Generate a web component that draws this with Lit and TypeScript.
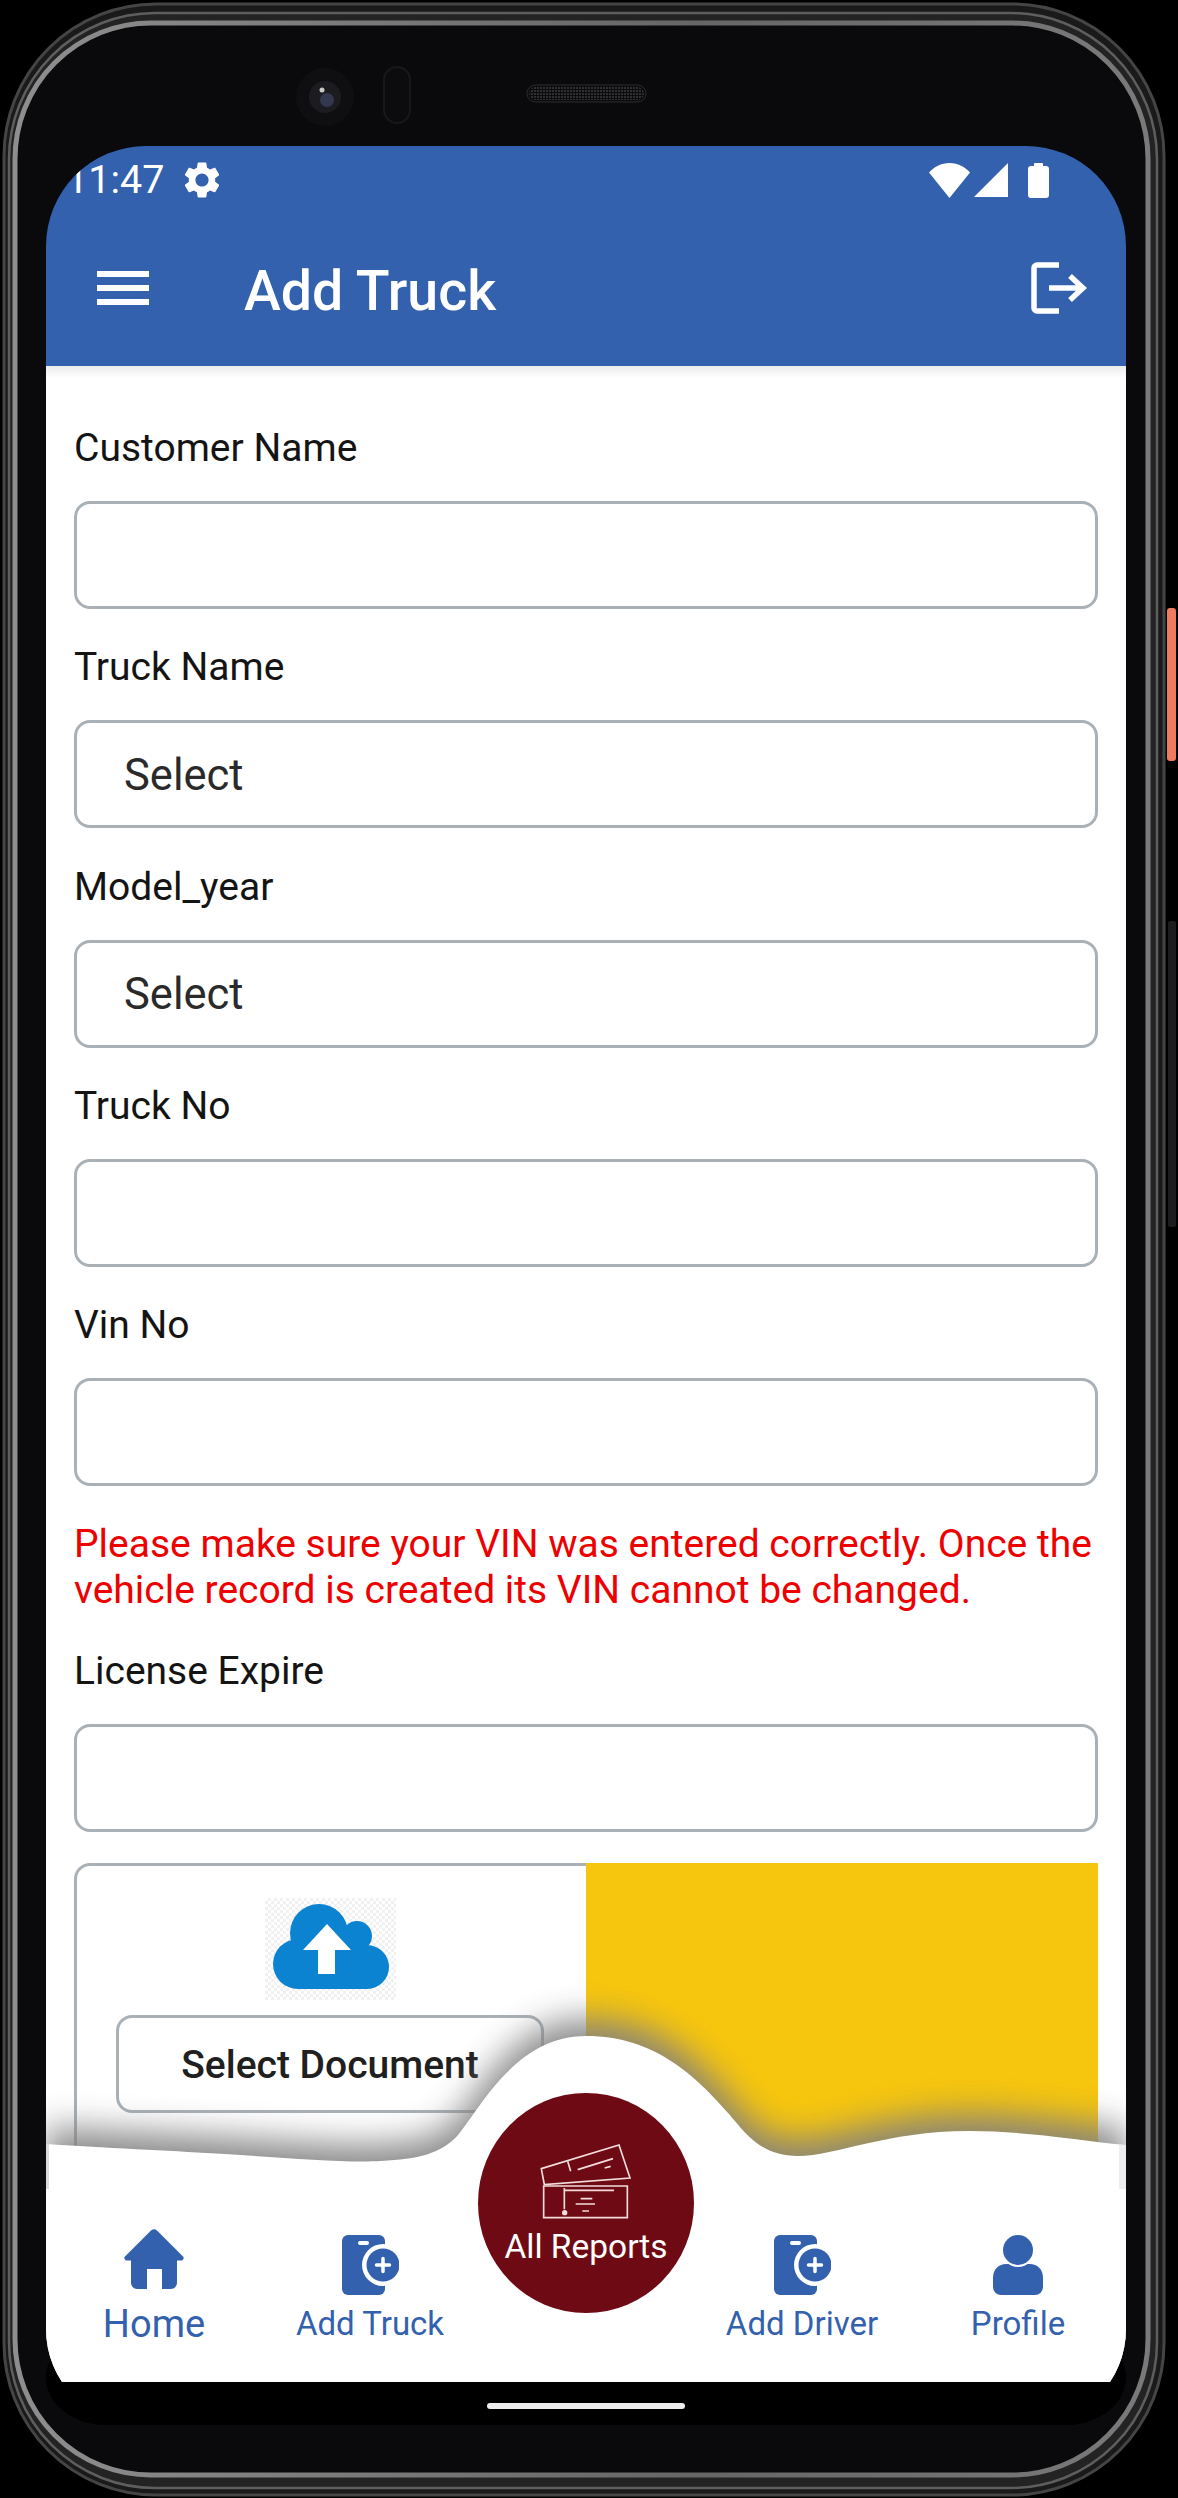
import { LitElement, html, css, svg } from "lit";
import { customElement } from "lit/decorators.js";

const GEAR = "M19.14,12.94c0.04-0.3,0.06-0.61,0.06-0.94c0-0.32-0.02-0.64-0.07-0.94l2.03-1.58c0.18-0.14,0.23-0.41,0.12-0.61l-1.92-3.32c-0.12-0.22-0.37-0.29-0.59-0.22l-2.39,0.96c-0.5-0.38-1.03-0.7-1.62-0.94L14.4,2.81c-0.04-0.24-0.24-0.41-0.48-0.41h-3.84c-0.24,0-0.43,0.17-0.47,0.41L9.25,5.35C8.66,5.59,8.12,5.92,7.63,6.29L5.24,5.33c-0.22-0.08-0.47,0-0.59,0.22L2.74,8.87C2.62,9.08,2.66,9.34,2.86,9.48l2.03,1.58C4.84,11.36,4.8,11.69,4.8,12s0.02,0.64,0.07,0.94l-2.03,1.58c-0.18,0.14-0.23,0.41-0.12,0.61l1.92,3.32c0.12,0.22,0.37,0.29,0.59,0.22l2.39-0.96c0.5,0.38,1.03,0.7,1.62,0.94l0.36,2.54c0.05,0.24,0.24,0.41,0.48,0.41h3.84c0.24,0,0.44-0.17,0.47-0.41l0.36-2.54c0.59-0.24,1.13-0.56,1.62-0.94l2.39,0.96c0.22,0.08,0.47,0,0.59-0.22l1.92-3.32c0.12-0.22,0.07-0.47-0.12-0.61L19.14,12.94z M12,15.6c-1.98,0-3.6-1.62-3.6-3.6s1.62-3.6,3.6-3.6s3.6,1.62,3.6,3.6S13.98,15.6,12,15.6z";

const CURVE = "M0,162 C80,167 130,169 179,172 C240,176 300,181 335,179 C372,177 395,172 412,153 C435,125 470,54 540,54 C610,54 650,95 683,132 C700,152 715,174 752,174 C790,174 840,149 923,149 C980,149 1030,158 1080,163 L1080,400 L0,400 Z";

const frame = svg`
  <svg class="frame" viewBox="0 0 1178 2498" width="1178" height="2498" aria-hidden="true">
    <defs>
      <pattern id="mesh" width="3" height="3" patternUnits="userSpaceOnUse">
        <circle cx="1" cy="1" r="0.8" fill="#5a5a5a"></circle>
      </pattern>
      <linearGradient id="topfade" x1="0" x2="1" y1="0" y2="0">
        <stop offset="0" stop-color="#8e8e8e"></stop>
        <stop offset="0.6" stop-color="#666"></stop>
        <stop offset="1" stop-color="#7a7a7a"></stop>
      </linearGradient>
    </defs>
    <rect x="1167" y="608" width="9" height="153" rx="3" fill="#ee7a5f"></rect>
    <rect x="1168" y="921" width="8" height="306" rx="2" fill="#1c1c1e"></rect>
    <rect x="4" y="4" width="1160" height="2491" rx="152" fill="#1a1a1b" stroke="#454545" stroke-width="3"></rect>
    <rect x="9" y="13" width="1148" height="2475" rx="146" fill="#232324" stroke="#5e5e5e" stroke-width="2.500"></rect>
    <rect x="15" y="23" width="1133" height="2452" rx="136" fill="#0a0a0c" stroke="url(#topfade)" stroke-width="5"></rect>
    <rect x="46" y="2330" width="1080" height="95" rx="60" fill="#000"></rect>
    <circle cx="325" cy="97" r="29" fill="#0f0f11"></circle>
    <circle cx="325" cy="97" r="16" fill="#1c1c20"></circle>
    <circle cx="327" cy="100" r="7" fill="#333850"></circle>
    <circle cx="322" cy="90" r="2.500" fill="#c8c8c8"></circle>
    <rect x="384" y="67" width="26" height="56" rx="13" fill="#0c0c0e" stroke="#18181a" stroke-width="2"></rect>
    <rect x="527" y="85" width="119" height="17" rx="8.500" fill="#0c0c0e" stroke="#2c2c2e"></rect>
    <rect x="529" y="87" width="115" height="13" rx="6.500" fill="url(#mesh)"></rect>
  </svg>`;

const phoneAdd = svg`
  <svg class="nav-icon" width="57" height="60" viewBox="0 0 57 60" aria-hidden="true">
    <path d="M6 0H37a6 6 0 0 1 6 6V54a6 6 0 0 1-6 6H6a6 6 0 0 1-6-6V6a6 6 0 0 1 6-6Z" fill="#3361ae"></path>
    <rect x="16" y="6" width="11" height="4" rx="2" fill="#fff"></rect>
    <circle cx="41" cy="30" r="21" fill="#fff"></circle>
    <circle cx="41" cy="30" r="16.500" fill="#3361ae"></circle>
    <path d="M41 23.500V36.500M34.500 30H47.500" stroke="#fff" stroke-width="3.500" stroke-linecap="round"></path>
  </svg>`;

const NAV_LEFT = [
  { label: "Home", cls: "home", icon: svg`
    <svg class="nav-icon" width="60" height="60" viewBox="0 0 60 60" aria-hidden="true">
      <path fill-rule="evenodd" fill="#3361ae" d="M27 1.500a4.500 4.500 0 0 1 6 0L58.500 27a2.500 2.500 0 0 1-2 4.500H53V54a6 6 0 0 1-6 6H38V40H23V60H13a6 6 0 0 1-6-6V31.500H3.500a2.500 2.500 0 0 1-2-4.500Z"></path>
    </svg>` },
  { label: "Add Truck", cls: "", icon: phoneAdd },
];
const NAV_RIGHT = [
  { label: "Add Driver", cls: "", icon: phoneAdd },
  { label: "Profile", cls: "", icon: svg`
    <svg class="nav-icon" width="50" height="60" viewBox="0 0 50 60" aria-hidden="true">
      <path fill="#3361ae" d="M0 43C0 34 6 29 13 29H37C44 29 50 34 50 43V52a8 8 0 0 1-8 8H8a8 8 0 0 1-8-8Z"></path>
      <circle cx="25" cy="15" r="17" fill="#fff"></circle>
      <circle cx="25" cy="15" r="15" fill="#3361ae"></circle>
    </svg>` },
];

@customElement("app-root")
export class AppRoot extends LitElement {
  static styles = css`
    :host {
      display: block;
      position: relative;
      width: 1178px;
      height: 2498px;
      box-sizing: border-box;
      padding: 146px 52px 73px 46px;
      background: #000;
      font-family: Roboto, "Liberation Sans", sans-serif;
      overflow: hidden;
    }
    .frame { position: absolute; left: 0; top: 0; display: block; }
    .screen {
      position: relative;
      height: 100%;
      display: flex;
      flex-direction: column;
      border-radius: 100px 100px 96px 96px;
      overflow: hidden;
      background: #000;
    }
    .appbar {
      height: 220px;
      flex: none;
      background: #3361ae;
      color: #fff;
      display: flex;
      flex-direction: column;
      position: relative;
      z-index: 1;
    }
    .status {
      height: 68px;
      display: flex;
      align-items: center;
      padding: 0 77px 0 20px;
    }
    .time { font-size: 39.500px; line-height: 68px; }
    .gear { margin-left: 16px; display: block; }
    .sp { flex: 1; }
    .status-icons { display: flex; align-items: center; }
    .status-icons svg { display: block; }
    .sig { margin-left: 4px; }
    .bat { margin-left: 20px; }
    .toolbar {
      flex: 1;
      display: flex;
      align-items: center;
      padding: 0 39px 4px 51px;
    }
    .burger { display: flex; flex-direction: column; gap: 8px; width: 52px; }
    .burger span { display: block; height: 6px; background: #fff; }
    .title { margin: 8px 0 0 95px; font-size: 55.500px; font-weight: 500; line-height: 60px; }
    .main {
      position: relative;
      flex: 1;
      min-height: 0;
      background: #fff;
      overflow: hidden;
      padding: 59px 28px 0;
    }
    .main::before {
      content: "";
      position: absolute;
      left: 0; right: 0; top: 0;
      height: 12px;
      background: linear-gradient(#ececec, #fff);
    }
    .field { margin-bottom: 35.250px; }
    .field.last { margin-bottom: 31px; }
    .field label {
      display: block;
      font-size: 39px;
      line-height: 46px;
      color: #141414;
      margin-bottom: 30px;
    }
    .input {
      height: 108px;
      box-sizing: border-box;
      border: 3px solid #a9b0b6;
      border-radius: 16px;
      padding: 2px 0 0 47px;
      display: flex;
      align-items: center;
      font-size: 43.500px;
      color: #2a2a2a;
      background: #fff;
    }
    .warn {
      color: #ee0000;
      font-size: 39px;
      line-height: 46px;
      margin-bottom: 35px;
      white-space: nowrap;
    }
    .upload {
      display: grid;
      grid-template-columns: 1fr 1fr;
      height: 500px;
    }
    .up-left {
      box-sizing: border-box;
      border: 3px solid #a9b0b6;
      border-right: 0;
      border-bottom: 0;
      border-radius: 16px 0 0 0;
      display: flex;
      flex-direction: column;
      align-items: center;
      padding: 32px 3px 0 0;
    }
    .up-right { background: #f6c50e; }
    .cloud-box {
      width: 131px;
      height: 102px;
      background: repeating-conic-gradient(#f1f1f1 0 25%, #fff 0 50%) 0 0 / 6px 6px;
    }
    .cloud-box svg { display: block; }
    .doc-btn {
      margin-top: 15px;
      width: 428px;
      height: 98px;
      box-sizing: border-box;
      border: 3px solid #a9b0b6;
      border-radius: 16px;
      display: flex;
      align-items: center;
      justify-content: center;
      padding-top: 2px;
      font-size: 39px;
      font-weight: 500;
      color: #202020;
      background: #fff;
    }
    .nav {
      position: absolute;
      left: 0;
      right: 0;
      bottom: 0;
      height: 400px;
    }
    .wave { position: absolute; left: 0; top: 0; display: block; overflow: visible; }
    .row {
      position: absolute;
      left: 0;
      right: 0;
      bottom: 0;
      height: 289px;
      display: grid;
      grid-template-columns: repeat(5, 216px);
    }
    .item {
      display: flex;
      flex-direction: column;
      justify-content: flex-end;
      align-items: center;
      padding-bottom: 38px;
      color: #3361ae;
      font-size: 33px;
      line-height: 40px;
      white-space: nowrap;
    }
    .item .nav-icon { display: block; margin-bottom: 9px; filter: blur(0.5px); }
    .item.home { font-size: 38px; }
    .item.home .nav-icon { margin-bottom: 15px; }
    .fab-cell { display: flex; justify-content: center; align-items: flex-start; }
    .fab {
      width: 220px;
      height: 220px;
      border-radius: 50%;
      background: #6e0a14;
      color: #fff;
      display: flex;
      flex-direction: column;
      align-items: center;
      box-sizing: border-box;
      padding-top: 49px;
      font-size: 33.500px;
      line-height: 40px;
    }
    .fab svg { display: block; margin-bottom: 6px; }
    .sysbar {
      flex: none;
      height: 43px;
      background: #000;
      display: flex;
      justify-content: center;
      padding-top: 21px;
      box-sizing: border-box;
    }
    .sysbar span { display: block; width: 198px; height: 6px; border-radius: 3px; background: #eee; }
  `;

  private field(label: string, value = "", last = false) {
    return html`<div class="field ${last ? "last" : ""}"><label>${label}</label><div class="input">${value}</div></div>`;
  }

  render() {
    return html`
      ${frame}
      <div class="screen">
        <header class="appbar">
          <div class="status">
            <span class="time">11:47</span>
            <svg class="gear" width="44" height="44" viewBox="0 0 24 24" aria-hidden="true"><path fill="#fff" d=${GEAR}></path></svg>
            <span class="sp"></span>
            <div class="status-icons">
              <svg width="41" height="35" viewBox="0 0 41 35" aria-hidden="true"><path fill="#fff" d="M20.500 35 0 9.500C5 4 12 0 20.500 0S36 4 41 9.500Z"></path></svg>
              <svg class="sig" width="34" height="34" viewBox="0 0 34 34" aria-hidden="true"><path fill="#fff" d="M34 0V34H0Z"></path></svg>
              <svg class="bat" width="21" height="36" viewBox="0 0 21 36" aria-hidden="true"><path fill="#fff" d="M6 2a1 1 0 0 1 1-1h7a1 1 0 0 1 1 1v2h3a3 3 0 0 1 3 3v26a3 3 0 0 1-3 3H3a3 3 0 0 1-3-3V7a3 3 0 0 1 3-3h3Z"></path></svg>
            </div>
          </div>
          <div class="toolbar">
            <div class="burger"><span></span><span></span><span></span></div>
            <span class="title">Add Truck</span>
            <span class="sp"></span>
            <svg width="56" height="52" viewBox="0 0 56 52" aria-hidden="true" fill="none" stroke="#fff" stroke-width="5.500">
              <path d="M28 3H6a3 3 0 0 0-3 3V46a3 3 0 0 0 3 3H28"></path>
              <path d="M18 26H52M39 14 52 26 39 38"></path>
            </svg>
          </div>
        </header>
        <main class="main">
          ${this.field("Customer Name")}
          ${this.field("Truck Name", "Select")}
          ${this.field("Model_year", "Select")}
          ${this.field("Truck No")}
          ${this.field("Vin No")}
          <div class="warn">Please make sure your VIN was entered correctly. Once the<br />vehicle record is created its VIN cannot be changed.</div>
          ${this.field("License Expire", "", true)}
          <section class="upload">
            <div class="up-left">
              <div class="cloud-box">
                <svg width="131" height="102" viewBox="0 0 131 102" aria-hidden="true">
                  <g fill="#0b83d0">
                    <circle cx="54" cy="35" r="29"></circle>
                    <circle cx="92" cy="38" r="15"></circle>
                    <circle cx="33" cy="66" r="25"></circle>
                    <circle cx="102" cy="69" r="22"></circle>
                    <rect x="33" y="40" width="70" height="51"></rect>
                  </g>
                  <path fill="#fff" d="M62 26 86 52H70V76H53V52H38Z"></path>
                </svg>
              </div>
              <div class="doc-btn">Select Document</div>
            </div>
            <div class="up-right"></div>
          </section>
          <nav class="nav">
            <svg class="wave" width="1080" height="400" viewBox="0 0 1080 400" aria-hidden="true">
              <defs>
                <filter id="sh" x="-5%" y="-20%" width="110%" height="140%">
                  <feGaussianBlur stdDeviation="17"></feGaussianBlur>
                </filter>
              </defs>
              <path d=${CURVE} fill="#808080" opacity="0.92" filter="url(#sh)" transform="translate(0,-17)"></path>
              <path d=${CURVE} fill="#fff"></path>
              <rect x="0" y="162" width="3" height="45" fill="#dcdcdc"></rect>
              <rect x="1073" y="163" width="7" height="44" fill="#eeeeee"></rect>
            </svg>
            <div class="row">
              ${NAV_LEFT.map((n) => html`<div class="item ${n.cls}">${n.icon}<span>${n.label}</span></div>`)}
              <div class="fab-cell">
                <div class="fab">
                  <svg width="94" height="79" viewBox="240 240 282 237" aria-hidden="true" fill="none" stroke="#f3dcdc" stroke-width="5">
                    <path d="M247 320 480 249 513 348 256 368Z"></path>
                    <path d="M254 372H505V467H254Z"></path>
                    <path d="M326 298 335 328M356 323 462 290M437 318 455 313"></path>
                    <path d="M316 378V442M316 385H465M365 410H400M350 426H408M370 447H390"></path>
                    <circle cx="317" cy="452" r="8" fill="#f3dcdc" stroke="none"></circle>
                  </svg>
                  <span>All Reports</span>
                </div>
              </div>
              ${NAV_RIGHT.map((n) => html`<div class="item ${n.cls}">${n.icon}<span>${n.label}</span></div>`)}
            </div>
          </nav>
        </main>
        <div class="sysbar"><span></span></div>
      </div>
    `;
  }
}
